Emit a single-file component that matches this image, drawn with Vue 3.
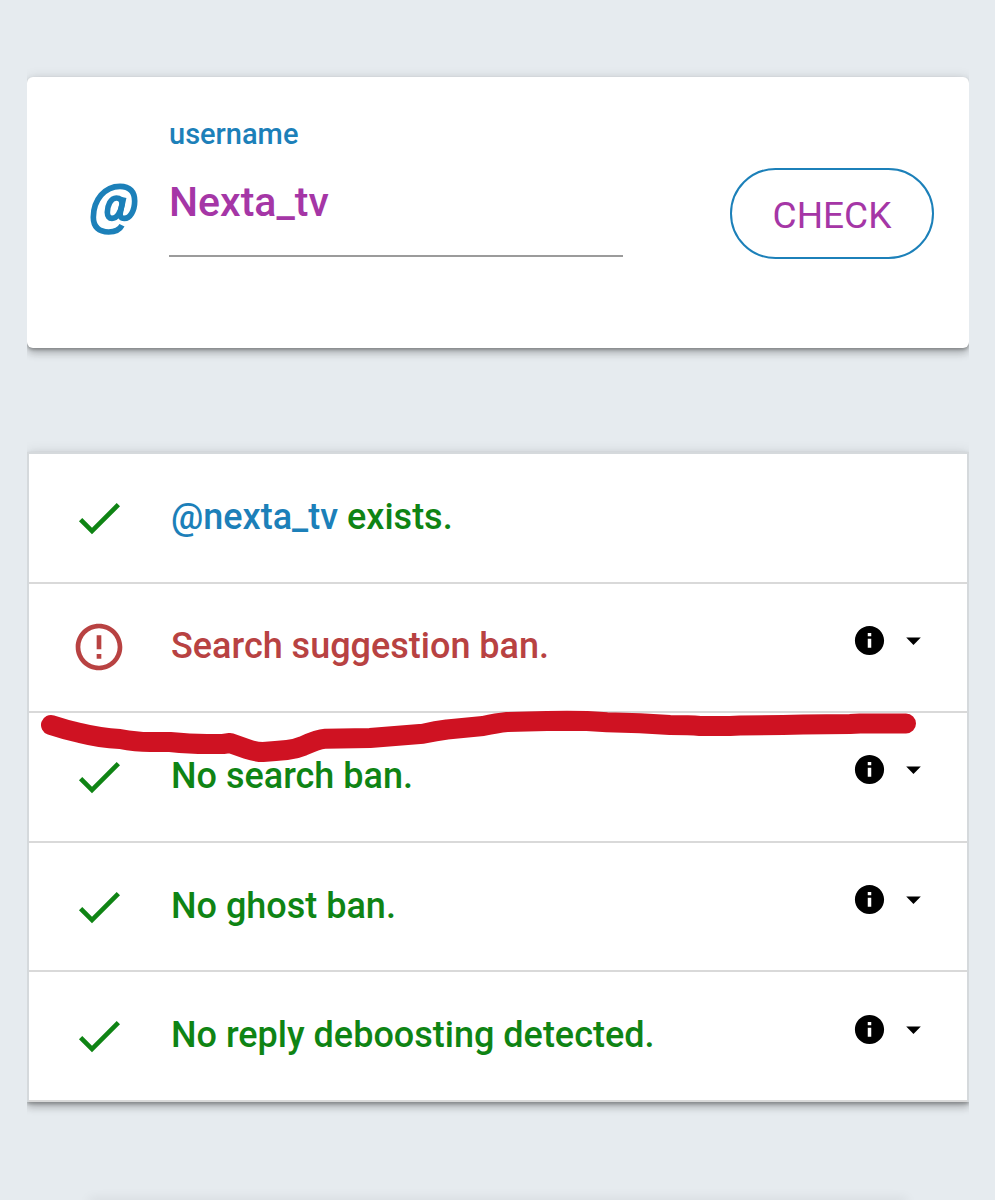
<script setup>
import { ref } from 'vue'

const username = ref('Nexta_tv')

const results = [
  { id: 'exists', handle: '@nexta_tv', text: 'exists.', ok: true, details: false },
  { id: 'suggestion', text: 'Search suggestion ban.', ok: false, details: true },
  { id: 'search', text: 'No search ban.', ok: true, details: true },
  { id: 'ghost', text: 'No ghost ban.', ok: true, details: true },
  { id: 'reply', text: 'No reply deboosting detected.', ok: true, details: true },
]
</script>

<template>
  <main class="page">
    <form class="card" @submit.prevent>
      <svg class="at" viewBox="0 0 144 159" aria-hidden="true">
        <path d="M96 127C88 143 71 147 56 147C26 147 10 132 10 103C10 50 45 10 90 10C120 10 134 27 134 54C134 84 120 106 103 106C92 106 89 98 91 88L101 43" />
        <path d="M96 65C97 51 89 45 79 45C62 45 52 68 52 88C52 100 58 106 66 106C80 106 92 90 96 65" />
      </svg>
      <div class="field">
        <label for="username">username</label>
        <input id="username" v-model="username" type="text" autocomplete="off" spellcheck="false" />
      </div>
      <button class="check" type="submit">CHECK</button>
    </form>

    <section class="results">
      <ul class="list">
        <li v-for="r in results" :key="r.id" class="row" :class="r.ok ? 'ok' : 'bad'">
          <svg class="status" viewBox="0 0 24 24" aria-hidden="true">
            <path v-if="r.ok" d="M9 16.17L4.83 12l-1.42 1.41L9 19 21 7l-1.41-1.41z" />
            <path v-else d="M11 15h2v2h-2zm0-8h2v6h-2zm.99-5C6.47 2 2 6.48 2 12s4.47 10 9.99 10C17.52 22 22 17.52 22 12S17.52 2 11.99 2zM12 20c-4.42 0-8-3.58-8-8s3.58-8 8-8 8 3.58 8 8-3.58 8-8 8z" />
          </svg>
          <p class="text"><a v-if="r.handle" href="#">{{ r.handle }}</a>{{ r.handle ? ' ' + r.text : r.text }}</p>
          <button v-if="r.details" class="details" type="button" :aria-label="'Details: ' + r.text">
            <svg viewBox="0 0 24 24" aria-hidden="true">
              <path d="M12 2C6.48 2 2 6.48 2 12s4.48 10 10 10 10-4.48 10-10S17.52 2 12 2zm1.200 15h-2.400v-6.200h2.400zm0-8h-2.400V6.800h2.400z" />
            </svg>
            <svg viewBox="0 0 24 24" aria-hidden="true"><path d="M7 10l5 5 5-5z" /></svg>
          </button>
        </li>
      </ul>
      <svg class="marker" viewBox="27 452 942 650" aria-hidden="true">
        <path d="M51 725Q66 730 80 733Q100 738 120 739Q136 742 150 742L170 742Q190 744 207 744L223 744L230 743L247 749Q256 752 263 752Q276 751 287 750Q296 749 303 746Q318 739 325 738.700L370 738L423 733.700Q436 731 447 729.500L483 726Q497 723 507 722L527 721.500Q547 721 567 720.700L587 721L607 722.300L640 723.300L670 725Q690 725 700 726L730 726L740 725.500L783 725L803 724.500L850 724L860 723.500L906 723.500" />
      </svg>
    </section>

    <div class="next-card"></div>
  </main>
</template>

<style>
body {
  margin: 0;
  background: #e6ebef;
}
</style>

<style scoped>
.page {
  box-sizing: border-box;
  min-height: 100vh;
  padding: 77px 26px 0 27px;
  overflow: hidden;
  background: #e6ebef;
  font-family: Roboto, "Liberation Sans", sans-serif;
  font-weight: 500;
}
.card,
.list {
  box-shadow: 0 5px 8px rgba(0, 0, 0, 0.24), 0 2px 3px rgba(0, 0, 0, 0.22), 0 0 12px rgba(0, 0, 0, 0.1);
  clip-path: inset(-24px 0);
}
.card {
  box-sizing: border-box;
  display: grid;
  grid-template-columns: 79px minmax(0, 454px) auto;
  align-items: start;
  min-height: 271px;
  padding: 40px 35px 40px 63px;
  background: #fff;
  border-radius: 6px;
}
.at {
  width: 48px;
  height: 53px;
  margin-top: 66px;
  fill: none;
  stroke: #1c80b9;
  stroke-width: 17;
  stroke-linecap: butt;
  stroke-linejoin: round;
}
.field {
  display: flex;
  flex-direction: column;
}
.field label {
  color: #1c80b9;
  font-size: 29px;
  line-height: 34px;
}
.field input {
  box-sizing: border-box;
  width: 100%;
  height: 106px;
  padding: 0 0 2px;
  border: 0;
  border-bottom: 2px solid #9b9b9b;
  outline: 0;
  background: transparent;
  color: #a536a6;
  font: inherit;
  font-size: 41px;
}
.check {
  justify-self: end;
  box-sizing: border-box;
  min-width: 204px;
  height: 91px;
  margin-top: 51px;
  padding: 4px 32px 0;
  border: 2px solid #1c80b9;
  border-radius: 46px;
  background: #fff;
  color: #a536a6;
  font: inherit;
  font-size: 37px;
  font-weight: 400;
}
.results {
  position: relative;
  margin-top: 104px;
}
.list {
  box-sizing: border-box;
  display: grid;
  grid-auto-rows: 1fr;
  min-height: 650px;
  margin: 0;
  padding: 0;
  border: 2px solid #d5d9dc;
  border-bottom: 0;
  background: #fff;
  list-style: none;
}
.row {
  display: grid;
  grid-template-columns: 56px minmax(0, 1fr) auto;
  column-gap: 44px;
  align-items: center;
  padding: 0 36px 0 42px;
  border-bottom: 2px solid #d9d9d9;
}
.status {
  width: 56px;
  height: 56px;
  fill: currentColor;
}
.ok {
  color: #0f8414;
}
.bad {
  color: #b84242;
}
.text {
  margin: 0 0 2px;
  font-size: 36px;
  line-height: 44px;
}
.text a {
  color: #1c80b9;
  text-decoration: none;
}
.details {
  display: flex;
  gap: 9px;
  margin: 0 0 14px;
  padding: 0;
  border: 0;
  background: transparent;
  color: #000;
}
.details svg {
  width: 35px;
  height: 35px;
  fill: currentColor;
}
.marker {
  position: absolute;
  top: 0;
  left: 0;
  width: 100%;
  pointer-events: none;
}
.marker path {
  fill: none;
  stroke: #cf1222;
  stroke-width: 20;
  stroke-linecap: round;
  stroke-linejoin: round;
}
.next-card {
  height: 4px;
  margin: 98px 62px 0;
  box-shadow: 0 0 12px rgba(0, 0, 0, 0.14);
}
</style>
